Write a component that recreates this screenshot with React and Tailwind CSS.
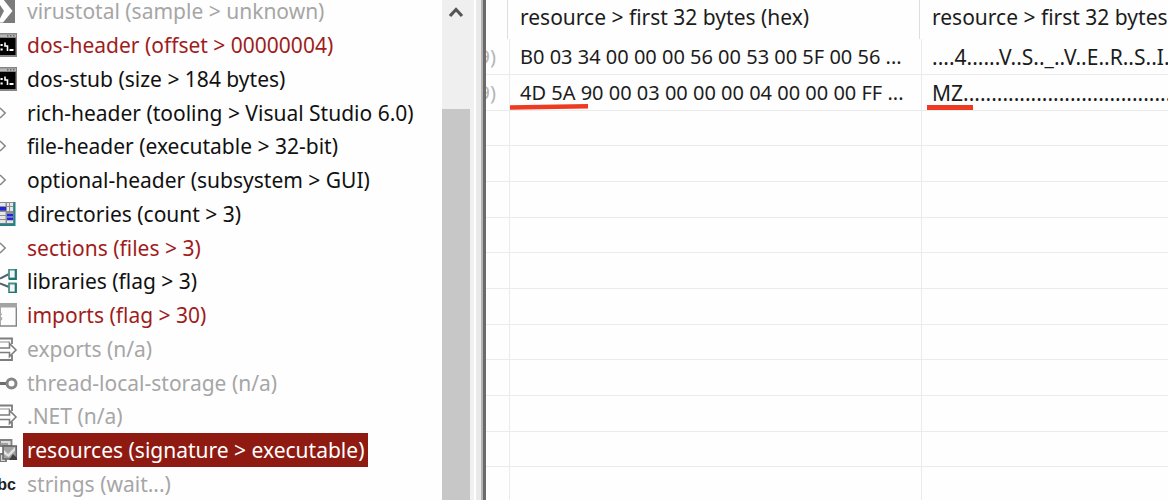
import React from "react";

const svgProps = {
  viewBox: "0 0 18 24",
  className: "h-6 w-[18px] shrink-0",
  "aria-hidden": true,
};

function ShieldIcon() {
  return (
    <svg {...svgProps}>
      <path d="M0 0H15V24H0Z" fill="#7b7b7b" />
      <path d="M0 0H3L12.500 12L3 23.500H0V19.500L4 12L0 6Z" fill="#fff" />
      <path d="M0 7.500L2.800 12L0 16.500Z" fill="#7b7b7b" />
    </svg>
  );
}

function ConsoleIcon() {
  return (
    <svg {...svgProps}>
      <path d="M0 0H17V24H0Z" fill="#858585" />
      <path d="M0 1.500H16V4H0Z" fill="#b8b8b8" />
      <path d="M7 2h1.500v1.500H7zM10 2h1.500v1.500H10zM13 2h1.500v1.500H13z" fill="#666" />
      <path d="M0 5H15.500V22H0Z" fill="#000" />
      <path d="M.5 11h2.200v2H.5zM.5 15.500h2.200v2H.5zM9.500 16h4v2h-4z" fill="#fff" />
      <path d="M5 9.500V13H7.500V18" fill="none" stroke="#fff" strokeWidth="1.600" />
    </svg>
  );
}

function DiamondIcon() {
  return (
    <svg {...svgProps}>
      <path d="M0 7L5.200 12L0 17" fill="none" stroke="#858585" strokeWidth="1.500" />
    </svg>
  );
}

function GridIcon() {
  return (
    <svg {...svgProps}>
      <path d="M0 0H15.500V24H0Z" fill="#2a8084" />
      <path d="M0 0H13.500V21.500H0Z" fill="#8a8f94" />
      <path d="M0 1h5.500v3H0zM0 10h5.500v3H0zM0 14h5.500v3H0zM0 18h5.500v3H0zM7 1h2v3H7zM10 1h3v3h-3zM7 5h2v4H7zM10 5h3v4h-3zM7 18.500h6V21H7z" fill="#e6e6e6" />
      <path d="M0 5h6v3.500H0zM7 12h6v6H7z" fill="#2323d8" />
      <path d="M7 14.500h6v1H7z" fill="#b9bce6" />
    </svg>
  );
}

function NodesIcon() {
  return (
    <svg {...svgProps}>
      <path d="M0 9.500L9 5M0 14.500L9 18" fill="none" stroke="#4d6470" strokeWidth="2" />
      <path d="M9 .5h6.500v9H9zM9 14.500h6.500v9H9z" fill="#f4f4f4" stroke="#4a8f8b" strokeWidth="1.800" />
      <path d="M16 0V10H9M16 14V24H9" fill="none" stroke="#1d7672" strokeWidth="1.800" />
    </svg>
  );
}

function WindowIcon() {
  return (
    <svg {...svgProps}>
      <path d="M0 1H16.300V23H0Z" fill="#fdfdfd" stroke="#858585" strokeWidth="1.400" />
      <path d="M0 .5H17V4.500H0Z" fill="#a3a3a3" />
      <path d="M2 11.500Q-.5 10.500-.5 12.500T1.500 15Q2 17.500-1 17" fill="none" stroke="#aaa" strokeWidth="1.400" />
    </svg>
  );
}

function ExportIcon() {
  return (
    <svg {...svgProps}>
      <path d="M0 1.500H12V7M0 23H12V18" fill="none" stroke="#7d7d7d" strokeWidth="1.800" />
      <path d="M0 5H10" stroke="#b5b5b5" strokeWidth="1.500" />
      <path d="M0 11H9.500V6.500L16 13L9.500 19.500V15.500H0" fill="#fff" stroke="#7d7d7d" strokeWidth="1.600" />
    </svg>
  );
}

function KeyIcon() {
  return (
    <svg {...svgProps}>
      <path d="M0 12.500H7" stroke="#6e6e6e" strokeWidth="3" />
      <circle cx="11.500" cy="12.500" r="4.500" fill="#fff" stroke="#858585" strokeWidth="3" />
    </svg>
  );
}

function ResourceIcon() {
  return (
    <svg {...svgProps}>
      <path d="M0 2H11.500V8H0Z" fill="#dcdcdc" stroke="#808080" strokeWidth="1.800" />
      <path d="M0 6H8" stroke="#8f8f8f" strokeWidth="1.500" />
      <path d="M0 16H6V24H0Z" fill="#d8d8d8" stroke="#777" strokeWidth="1.800" />
      <path d="M3 8H16.300V21H3Z" fill="#a3a3a3" stroke="#666" strokeWidth="1.500" />
      <path d="M4 12L8 16L15 9V12.500L8.500 19L4 16Z" fill="#e3e3e3" />
      <path d="M9 22L13 16L17 20V22Z" fill="#404040" />
    </svg>
  );
}

function AbcIcon() {
  return (
    <span aria-hidden="true" className="flex w-[18px] shrink-0 justify-end overflow-hidden pr-[2px] pt-[2px] font-['Liberation_Sans',sans-serif] text-base font-bold text-[#222222]">
      abc
    </span>
  );
}

const tones = {
  muted: "text-[#a6a6a6]",
  alert: "text-[#a01c1c]",
  normal: "text-[#111111]",
};

const items = [
  { label: "virustotal (sample > unknown)", tone: "muted", Icon: ShieldIcon },
  { label: "dos-header (offset > 00000004)", tone: "alert", Icon: ConsoleIcon },
  { label: "dos-stub (size > 184 bytes)", tone: "normal", Icon: ConsoleIcon },
  { label: "rich-header (tooling > Visual Studio 6.0)", tone: "normal", Icon: DiamondIcon },
  { label: "file-header (executable > 32-bit)", tone: "normal", Icon: DiamondIcon },
  { label: "optional-header (subsystem > GUI)", tone: "normal", Icon: DiamondIcon },
  { label: "directories (count > 3)", tone: "normal", Icon: GridIcon },
  { label: "sections (files > 3)", tone: "alert", Icon: DiamondIcon },
  { label: "libraries (flag > 3)", tone: "normal", Icon: NodesIcon },
  { label: "imports (flag > 30)", tone: "alert", Icon: WindowIcon },
  { label: "exports (n/a)", tone: "muted", Icon: ExportIcon },
  { label: "thread-local-storage (n/a)", tone: "muted", Icon: KeyIcon },
  { label: ".NET (n/a)", tone: "muted", Icon: ExportIcon },
  { label: "resources (signature > executable)", tone: "normal", Icon: ResourceIcon, selected: true },
  { label: "strings (wait...)", tone: "muted", Icon: AbcIcon },
];

function TreeItem({ label, tone, Icon, selected }) {
  return (
    <li className="h-[34px] nth-[4n]:h-[33px]">
      <button type="button" aria-pressed={!!selected} className="flex h-full items-center gap-[5px] whitespace-nowrap">
        <Icon />
        <span className={`flex h-full items-center px-1 ${selected ? "bg-[#8f1a12] text-white" : tones[tone]}`}>
          {label}
        </span>
      </button>
    </li>
  );
}

function Scrollbar() {
  return (
    <div className="flex w-7 shrink-0 flex-col bg-[#efefef]">
      <button type="button" aria-label="Scroll up" className="flex h-[109px] shrink-0 justify-center pt-[5px]">
        <svg viewBox="0 0 16 14" className="h-[14px] w-4" aria-hidden="true">
          <path d="M2 11L8 4.500L14 11" fill="none" stroke="#555" strokeWidth="3.200" />
        </svg>
      </button>
      <div className="flex-1 bg-[#c7c7c7]" />
    </div>
  );
}

const rows = [
  { size: "9)", hex: "B0 03 34 00 00 00 56 00 53 00 5F 00 56 ...", text: "....4......V..S.._..V..E..R..S..I." },
  { size: "9)", hex: "4D 5A 90 00 03 00 00 00 04 00 00 00 FF ...", text: "MZ.............................................", marked: true },
  ...Array.from({ length: 11 }, () => ({ size: "", hex: "", text: "" })),
];

function HeaderCell({ children }) {
  return (
    <th scope="col" className="group p-0 pr-[2px] text-left font-normal last:pr-0">
      <div className="flex h-[39px] items-center overflow-hidden whitespace-nowrap border-r border-[#dedede] pb-[6px] pl-[10px] text-[21px] group-last:border-r-0">
        {children}
      </div>
    </th>
  );
}

const cell = "relative border-r border-b border-[#ebebeb] p-0 whitespace-nowrap last:border-r-0";

function ByteTable() {
  return (
    <table className="w-full table-fixed border-separate border-spacing-0 text-[#1c1c1c]">
      <colgroup>
        <col className="w-6" />
        <col className="w-[412px]" />
        <col />
      </colgroup>
      <thead>
        <tr>
          <HeaderCell />
          <HeaderCell>resource &gt; first 32 bytes (hex)</HeaderCell>
          <HeaderCell>resource &gt; first 32 bytes</HeaderCell>
        </tr>
      </thead>
      <tbody>
        {rows.map((row, i) => (
          <tr key={i} className="h-9 nth-[3n]:h-[35px]">
            <td className={cell}>
              <div className="flex justify-end overflow-hidden pr-[13px] text-[#b5b5b5]">{row.size}</div>
            </td>
            <td className={cell}>
              <div className="overflow-hidden pl-[10px]">{row.hex}</div>
              {row.marked && (
                <svg viewBox="0 0 78 6" className="absolute bottom-0 left-0 h-[6px] w-[78px]" aria-hidden="true">
                  <path d="M0 1.200L78 0V4.500L0 5.800Z" fill="#ee3a20" />
                </svg>
              )}
            </td>
            <td className={cell}>
              <div className="overflow-hidden pl-[10px] text-[21px]">{row.text}</div>
              {row.marked && <div className="absolute bottom-0 left-[5px] h-[5px] w-[46px] bg-[#ee3a20]" />}
            </td>
          </tr>
        ))}
      </tbody>
    </table>
  );
}

export default function App() {
  return (
    <main className="flex h-screen overflow-hidden bg-[#fefefe] font-['Noto_Sans','Open_Sans',sans-serif] text-[20px] leading-7">
      <nav aria-label="File structure" className="w-[442px] shrink-0">
        <ul className="-mt-[6px] text-[21px]">
          {items.map((item) => (
            <TreeItem key={item.label} {...item} />
          ))}
        </ul>
      </nav>
      <Scrollbar />
      <div className="w-1 shrink-0 bg-[#f0f0f0]" />
      <div className="w-3 shrink-0 border-l-2 border-r-[3px] border-l-white border-r-[#6a6a6a] bg-[#e9e9e9]">
        <div className="ml-auto h-full w-[2px] bg-[#b4b4b4]" />
      </div>
      <section className="min-w-0 flex-1">
        <ByteTable />
      </section>
    </main>
  );
}
